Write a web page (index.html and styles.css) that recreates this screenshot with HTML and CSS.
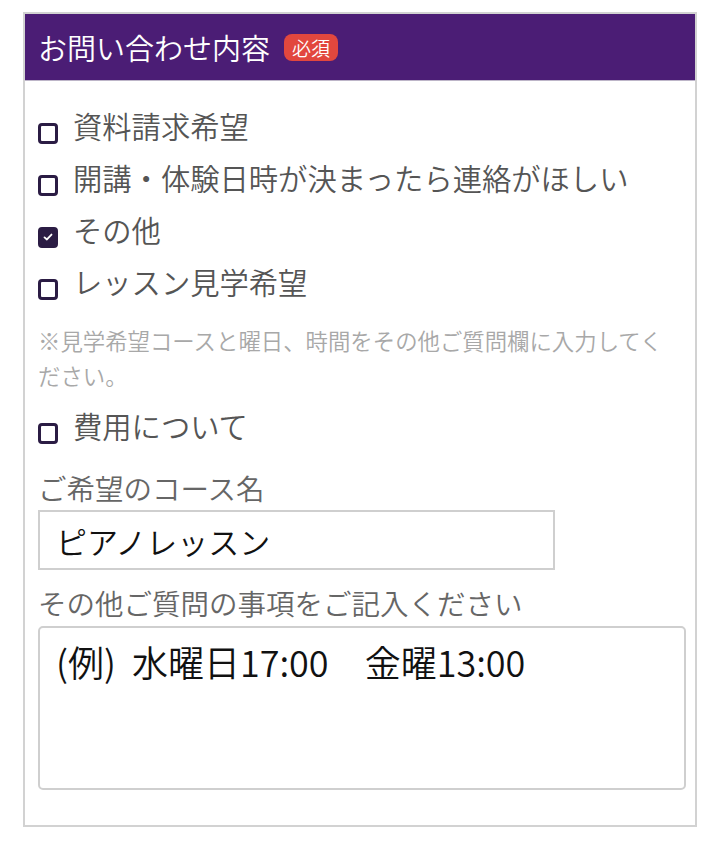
FILE: index.html
```html
<!DOCTYPE html>
<html>
<head>
  <title>お問い合わせ内容</title>
  <link rel="stylesheet" href="styles.css">
</head>
<body>
  <div class="form-box">
    <!-- Header -->
    <div class="form-header">
      <span class="form-title">お問い合わせ内容</span>
      <span class="required">必須</span>
    </div>

    <div class="form-body">
      <label class="check-row"><span class="check"></span>資料請求希望</label>
      <label class="check-row"><span class="check"></span>開講・体験日時が決まったら連絡がほしい</label>
      <label class="check-row"><span class="check checked"><svg viewBox="0 0 20 20" width="14" height="14"><path d="M5 10.5 L8.5 13.5 L15 6.5" fill="none" stroke="#fff" stroke-width="2.6" stroke-linecap="round" stroke-linejoin="round"/></svg></span>その他</label>
      <label class="check-row"><span class="check"></span>レッスン見学希望</label>

      <p class="note">※見学希望コースと曜日、時間をその他ご質問欄に入力してください。</p>

      <label class="check-row"><span class="check"></span>費用について</label>

      <div class="field-label">ご希望のコース名</div>
      <input class="text-input" type="text" value="ピアノレッスン">

      <div class="field-label second">その他ご質問の事項をご記入ください</div>
      <textarea class="text-area" placeholder="(例)  水曜日17:00　金曜13:00"></textarea>
    </div>
  </div>
</body>
</html>
```

FILE: styles.css
```css
body {
  margin: 0;
  padding: 0;
  background-color: #fff;
  font-family: 'Noto Sans CJK JP', 'Noto Sans', sans-serif;
  font-weight: 350;
  color: #555;
}

.form-box {
  width: 670px;
  margin: 12px 0 0 23px;
  border: 2px solid #d2d2d2;
  background-color: #fff;
}

.form-header {
  display: flex;
  align-items: center;
  height: 66px;
  padding: 0 13px;
  background-color: #4b1d75;
  border-bottom: 1px solid #bdb5c8;
}

.form-title {
  font-size: 29px;
  color: #fff;
}

.required {
  display: inline-block;
  margin-left: 14px;
  padding: 0 8px;
  height: 27px;
  line-height: 27px;
  font-size: 19px;
  color: #fff;
  background-color: #e2473e;
  border-radius: 8px;
}

.form-body {
  padding: 18px 12px 35px 13px;
}

.check-row {
  display: flex;
  align-items: center;
  height: 52px;
  font-size: 29.3px;
  color: #555;
}

.check {
  display: inline-flex;
  align-items: center;
  justify-content: center;
  box-sizing: border-box;
  width: 20px;
  height: 21px;
  margin: 16px 15px 0 0;
  border: 3px solid #2b1c44;
  border-radius: 4px;
  flex-shrink: 0;
}

.check.checked {
  background-color: #2b1c44;
}

.note {
  margin: 16px 0 6px;
  font-size: 22.4px;
  line-height: 35px;
  color: #a8a8a8;
}

.field-label {
  margin-top: 17px;
  font-size: 28.5px;
  line-height: 40px;
  color: #666;
}

.field-label.second {
  margin-top: 13px;
}

.text-input {
  display: block;
  box-sizing: border-box;
  width: 517px;
  height: 60px;
  margin-top: 2px;
  padding: 0 16px;
  border: 2px solid #cfcfcf;
  border-radius: 0;
  font-family: 'Noto Sans CJK JP', sans-serif;
  font-weight: 350;
  font-size: 31px;
  color: #111;
  outline: none;
}

.text-area {
  display: block;
  box-sizing: border-box;
  width: 648px;
  height: 164px;
  margin-top: 3px;
  padding: 11px 16px;
  border: 2px solid #cfcfcf;
  border-radius: 5px;
  font-family: 'Noto Sans CJK JP', sans-serif;
  font-weight: 350;
  font-size: 36px;
  line-height: 44px;
  resize: none;
  outline: none;
}

.text-area::placeholder {
  color: #111;
  opacity: 1;
}
```
